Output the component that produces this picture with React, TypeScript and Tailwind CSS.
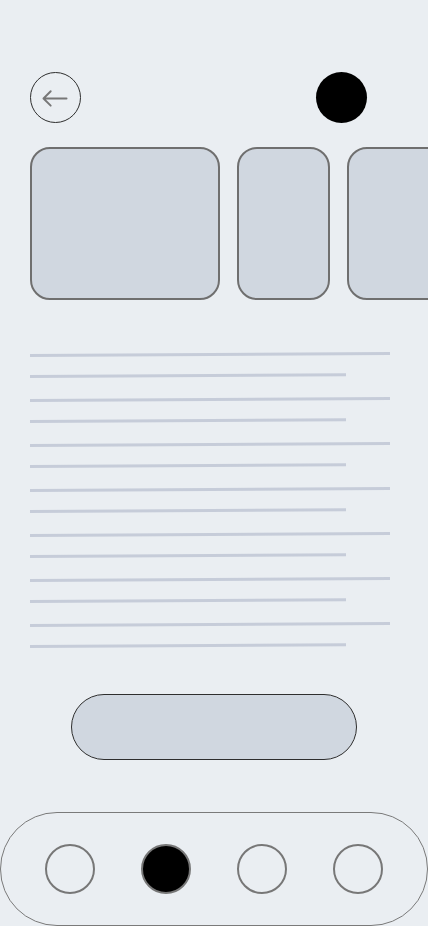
const lines = [0, 1, 2, 3, 4, 5, 6]

export default function App() {
  return (
    <div className="w-[428px] h-[926px] overflow-hidden bg-[#eaeef2] flex flex-col">
      <div className="mt-[72px] pl-[30px] pr-[61px] flex items-center justify-between">
        <button className="w-[51px] h-[51px] rounded-full border border-[#2e2e2e] flex items-center justify-center">
          <svg width="51" height="51" viewBox="0 0 51 51" fill="none">
            <path d="M13 26.5H37M20.5 19L13 26.5L20.5 34" stroke="#777" strokeWidth="2" strokeLinecap="round" strokeLinejoin="round" />
          </svg>
        </button>
        <div className="w-[51px] h-[51px] rounded-full bg-black" />
      </div>

      <div className="mt-[24px] pl-[30px] flex gap-[17px] overflow-hidden">
        <div className="shrink-0 w-[190px] h-[153px] rounded-[20px] border-2 border-[#6f6f6f] bg-[#d0d7e0]" />
        <div className="shrink-0 w-[93px] h-[153px] rounded-[20px] border-2 border-[#6f6f6f] bg-[#d0d7e0]" />
        <div className="shrink-0 w-[190px] h-[153px] rounded-[20px] border-2 border-[#6f6f6f] bg-[#d0d7e0]" />
      </div>

      <div className="mt-[54px] pl-[30px] flex flex-col">
        {lines.map((i) => (
          <div key={i} className={i === 0 ? 'flex flex-col' : 'flex flex-col mt-[21px]'}>
            <div className="w-[360px] h-[3px] bg-[#c6ccd9] origin-left -rotate-[0.32deg]" />
            <div className="mt-[18px] w-[316px] h-[3px] bg-[#c6ccd9] origin-left -rotate-[0.32deg]" />
          </div>
        ))}
      </div>

      <button className="mt-[46px] ml-[71px] w-[286px] h-[66px] shrink-0 rounded-full border border-[#2e2e2e] bg-[#d0d7e0]" />

      <nav className="mt-[52px] w-[428px] h-[114px] shrink-0 rounded-[57px] border border-[#7a7a7a] px-[44px] flex items-center justify-between">
        <div className="w-[50px] h-[50px] rounded-full border-2 border-[#777]" />
        <div className="w-[50px] h-[50px] rounded-full border-2 border-[#777] bg-black" />
        <div className="w-[50px] h-[50px] rounded-full border-2 border-[#777]" />
        <div className="w-[50px] h-[50px] rounded-full border-2 border-[#777]" />
      </nav>
    </div>
  )
}
